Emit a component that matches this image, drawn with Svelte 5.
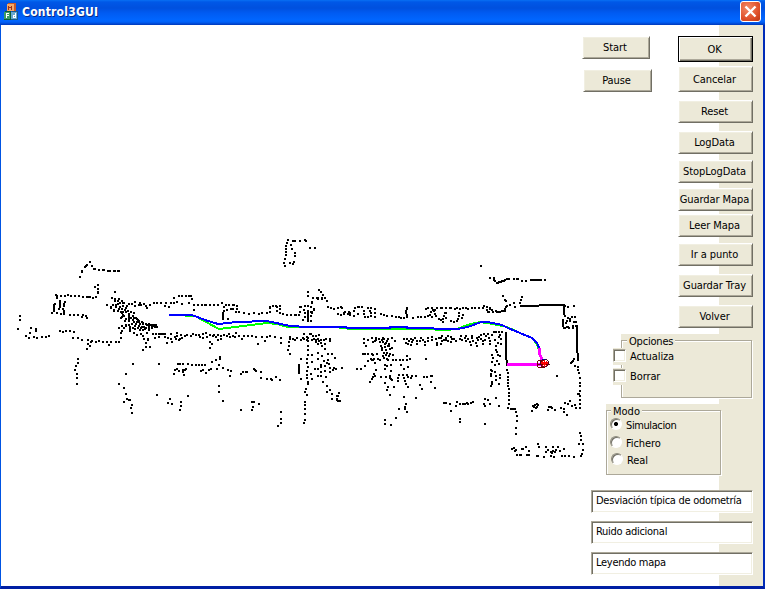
<script>
  const commands = ['OK', 'Cancelar', 'Reset', 'LogData', 'StopLogData', 'Guardar Mapa', 'Leer Mapa', 'Ir a punto', 'Guardar Tray', 'Volver'];
  const modes = ['Simulacion', 'Fichero', 'Real'];
  const messages = ['Desviación típica de odometría', 'Ruido adicional', 'Leyendo mapa'];
  let mode = $state('Simulacion');

  // Laser scan sectors: origin in pixels, readings in thirds of a pixel.
  const scans = [
    { x: 0, y: 225, data: `270,111 261,120 258,123 255,126 246,138 246,141 240,156 276,123 282,132 285,132 297,135 309,135 312,135 324,138 327,138 330,138 342,138 345,138 354,138 357,138
      294,180 285,186 294,192 294,201 294,204 168,210 171,213 171,216 171,219 183,213 195,213 204,210 213,213 225,213 237,213 249,216 261,216 264,216 270,216 279,219 288,216
      165,237 162,240 162,246 162,252 162,258 156,264 180,228 180,234 180,240 180,246 177,252 171,264 195,231 192,237 192,243 189,252 192,258 192,264 192,267 183,267
      210,270 222,270 234,270 246,276 249,270 258,273 261,279 60,273 60,285 54,312 93,309 108,312 108,318 90,324 78,333 87,339 102,336 111,339 126,336 138,336 147,333
      180,318 189,321 198,318 210,318 222,321 219,339 234,339 246,345 264,345 264,357 273,351 276,348 288,351 297,348 309,351 321,351 333,351 327,360 348,351 357,351 363,339 270,363 261,372
      234,402 234,414 228,423 225,435 231,447 231,459 231,477 357,477 372,489 378,507 381,522 387,525 390,525 372,531 396,540 393,549 396,564 378,447 399,417 477,417 471,510
      345,201 336,219 345,222 345,228 357,222 354,228 366,228 360,234 369,234 372,234 321,240 333,246 333,249 339,240 348,240 348,246 354,237 342,255 342,258 357,252 354,258 360,246 369,243 366,252 381,243 378,249 375,255 387,237 396,237 405,231 405,243 417,240 420,234 423,240 432,237 438,243 441,249 450,240 462,234 471,234 363,261 369,261 366,264 378,261 369,270 366,276 363,279 372,273 384,258 393,261 402,264 387,267 399,273 402,279 387,270 387,276 387,282 387,288 375,288 378,282 393,279 399,285 402,291 408,279 411,282 414,285 417,288 417,291 411,291 426,291 429,294 429,297 420,297 438,297 441,300 447,297 447,303 453,300 456,303 459,300 462,303 465,300 468,300 471,306 456,309 465,306 447,309 438,309 432,306 426,306 423,309 417,303 408,297 396,297 378,300 387,300 390,306 390,312 390,318 366,303 372,309 378,303 357,309 366,318 363,324 399,309 405,303 405,312 414,309 420,315 429,315 435,312 447,315 402,324 411,330 423,327 429,333 441,324 432,342 444,342 444,345 459,327 468,327 477,327 465,339 477,336 438,354 438,366 450,366 429,375` },
    { x: 160, y: 225, data: `384,45 381,54 378,63 378,72 378,81 378,90 375,102 372,114 375,123 393,60 396,72 405,84 405,93 402,111 399,117 390,114 399,48 405,48 420,48 435,45 438,48 450,69 465,69
      3,234 18,234 15,243 27,246 33,234 42,234 42,219 51,231 57,213 66,213 78,213 87,213 93,213 96,222 66,237 87,234 102,240 102,255 114,240 126,240 135,240 138,240 150,240 162,240 174,240 186,234 198,240 207,240 219,240 222,240 231,243 231,252 213,252 219,252 192,246 201,255 192,258 189,264 189,267 189,270 189,276 189,282 204,282 228,261 237,261 252,264 267,267 282,264 297,267 306,264 321,264 330,261 330,249 330,246 339,243 348,243 351,246 360,243 360,252 351,258 360,264 369,267 381,270 393,270 405,270 408,270 417,270 420,261 420,246 423,246 432,255 435,243 444,243 453,246 462,252 435,264 444,258 444,264 444,270 444,276 444,282 444,288 453,288 453,261 456,261 429,285 435,276 444,213 444,201 477,195 483,201 489,210 495,219 474,219 486,222 471,219 459,219 501,228 456,234 504,246
      3,327 9,327 15,327 15,336 24,339 21,354 33,327 33,342 36,351 45,336 51,324 51,333 48,342 57,345 63,330 60,342 66,339 75,333 81,330 93,333 99,327 108,330 117,330 120,336 129,339 129,327 138,324 141,336 150,330 150,351 156,357 150,369 159,333 162,330 168,336 174,330 174,345 183,342 183,333 192,330 201,333 210,336 207,327 219,333 225,336 228,324 237,333 246,342 252,333 264,333 276,333 288,336 294,357 306,336 315,348 321,336 330,333 345,336 363,339 363,354 390,336 390,342 387,351 387,363 384,375 390,387 399,342 405,345 411,339 423,345 429,339 432,327 432,342 441,336 441,345 450,327
      54,417 60,417 69,417 84,417 96,420 108,420 117,420 126,420 135,420 51,432 45,435 42,447 57,438 69,435 75,435 78,432 69,441 72,450 123,438 129,435 138,444 147,435 153,432 156,411 168,405 180,396 180,402 177,420 171,432 189,429 204,435 213,438 210,453 249,441 243,447 258,441 261,441 282,432 285,435 288,438 303,441 303,459 321,462 333,462 336,465 348,456 360,465 177,483 177,501 189,528 84,513 30,522 24,534 36,537 63,531 63,543 60,555 243,555 276,531 282,531 279,546 276,555 297,537 363,561 363,582 363,594 354,603 423,402 417,420 417,426 417,432 417,438 417,444 423,462 444,339 444,348 444,363 444,375 444,390 441,402 441,414 444,426 441,438 441,450 441,459 444,471 444,477 438,492 435,501 441,510 435,531 435,540 435,552 435,567 435,585 432,594` },
    { x: 310, y: 280, data: `27,30 33,36 39,45 36,54 21,54 24,57 9,54 45,54 51,63 6,66 6,69 54,81 12,87 12,90 3,81 6,99 3,108 3,123 63,84 72,87 84,84 93,81 96,84 84,102 93,105 102,99 105,96 102,102 117,96 120,99 120,105 114,102 132,93 135,84 144,81 147,81 156,81 132,108 144,102 162,93 162,102 165,111 174,111 180,93 183,99 183,108 174,84 195,87 195,99 195,111 183,84 213,102 222,105 231,108 246,108 258,111 267,111 273,114 282,114 291,84 291,87 288,93 288,99 291,105 291,111 309,114 324,111 333,111 345,111 354,108 366,111 348,87 354,84 366,84 369,90 375,90 372,93 363,96 360,105 375,102 381,84 387,117 378,108
      3,162 9,168 18,168 27,165 6,180 12,177 18,180 24,177 18,186 27,183 33,180 24,192 33,189 36,198 42,180 48,177 45,192 60,177 60,183 45,207 24,219 36,228 24,237 6,225 6,246 54,222 66,222 75,234 33,255 42,243 54,240 51,249 57,252 15,267 24,267 33,261 45,258 33,276 45,273 60,276 69,270 72,264 60,264 78,267 96,264 3,282 6,297 24,288 33,288 48,291 39,306 51,318 60,330 51,336 66,342 66,357 87,339 84,348 81,348 81,357 81,360 84,363 90,363
      162,177 162,189 168,198 174,180 186,174 189,186 198,174 198,180 195,183 207,177 210,186 216,180 219,174 222,177 219,186 231,183 234,177 246,174 255,183 225,192 228,189 237,192 213,198 216,204 225,201 234,198 240,207 246,204 216,210 228,210 237,198 222,219 231,219 240,222 249,225 159,222 165,222 174,222 186,222 189,225 201,222 192,237 189,240 183,237 186,240 174,243 204,237 210,240 222,234 231,237 237,228 228,225 219,228 234,240 249,240 258,240 270,240 279,240 291,240 300,237 291,228 348,237 273,255 294,261 282,267 195,249 165,258 153,267 141,267 198,270 225,255 231,258 243,255 225,267 243,273 192,282 189,291 186,297 180,306 195,288 213,291 228,291 240,288 240,294 243,297 246,300 264,294 267,285 264,303 279,285 282,294 291,285 285,303 294,291 303,294 306,288 318,288 288,312 294,321 330,315 336,327 342,291 351,291 363,288 366,288 363,306 375,324 225,309 234,321 252,321 231,330 240,345 282,351 318,354 288,372 285,381 285,387 267,387 291,396 258,414 225,420 225,432 243,435
      282,177 291,177 288,189 294,192 297,183 303,177 303,195 306,186 309,180 315,174 321,183 321,192 333,174 330,183 339,180 345,186 354,183 345,195 354,174 366,180 366,171 378,177 381,189 381,195 387,174` },
    { x: 440, y: 250, data: `123,48 150,84 162,84 162,90 165,93 171,99 174,99 177,96 183,96 186,93 192,93 195,90 201,87 204,87 207,87 222,87 231,87 234,87 246,93 258,93 273,90 279,90 285,90 291,90 297,90 303,90 315,90 189,138 195,150 198,153 246,141 243,150 240,159 222,159 210,165 225,171 201,168 198,171 195,177 195,183 186,183 192,183 180,186 177,186 171,186 168,183 156,180 159,186 144,186 147,186 141,180 150,177 150,174 141,171 132,168 129,174 117,174 105,174 96,174 84,177 78,174 69,174 60,177 51,174 45,177 33,174 30,174 18,174 6,174 3,174 15,189 18,189 12,198 18,204 9,207 3,210 9,216 33,213 42,216 51,213 54,207 57,198 66,204 69,195 57,189
      375,168 384,171 402,168 372,174 372,180 372,186 372,192 375,198 384,204 396,201 405,201 390,207 390,213 402,216 408,216 381,213 378,219 369,210 369,216 369,222 369,228 372,234 375,234 381,231 384,231 387,234 399,228 399,234 408,228
      3,264 6,258 6,273 3,282 12,270 18,264 18,270 24,258 24,273 33,261 36,267 33,276 42,267 48,273 60,267 63,258 66,270 75,264 78,258 78,273 84,267 90,276 93,285 96,258 96,264 99,273 111,264 114,270 108,279 111,288 117,261 123,255 123,267 129,273 129,282 132,252 138,258 135,270 144,252 147,264 150,273 150,282 156,255 162,246 168,246 177,246 186,246 180,255 177,261 183,267 165,270 174,279 183,282 168,288 168,300 171,306 174,315 156,315 159,324 156,336 171,333 177,342 180,318 165,345 153,360 156,363 153,372 153,378 165,366 168,378 180,375 180,384 168,390 177,402 156,396 156,402 153,408
      201,345 201,360 204,369 204,381 204,390 204,399 204,408 207,417 207,429 207,438 207,450 207,462 204,474 213,477 219,477 225,477 228,486 231,498 231,513 228,534 228,552 276,483 279,468 282,471 285,465 291,462 294,465 288,474 291,471 324,480 327,471 333,471 336,474 345,480 363,474 372,477 375,459 384,462 390,453 396,468 405,465 408,474 372,486 381,495 420,474 420,462 420,450 420,438 417,432 414,432 420,423 420,408 420,399 420,384 417,369 414,360 414,351 405,348 402,327 399,333 396,336 393,339 351,378
      12,459 18,459 30,462 48,468 51,456 60,462 69,462 75,462 81,459 84,462 93,459 99,456 33,483 60,507 60,516 135,522 135,447 135,468 132,462 144,450 150,462 168,444 177,468
      420,549 423,558 423,570 417,582 429,582 429,600 426,612 423,618 402,621 387,618 375,618 366,618 342,621 333,618 312,621 294,618 291,618 267,615 261,615 243,615 240,615 231,615 225,603 228,600 222,594 216,597 246,597 249,597 258,591 267,603 294,582 297,591 318,591 324,600 318,606 333,606 336,609 339,603 345,606 348,600 339,591 354,591 360,603 372,597` }
  ];
  const pixels = scans.flatMap(({ x, y, data }) => data.trim().split(/\s+/).map(pair => {
    const [dx, dy] = pair.split(',').map(Number);
    return `M${x + Math.round(dx / 3) - 1} ${y + Math.round(dy / 3) - 1}h2v2h-2z`;
  })).join('');
</script>

<main class="window">
  <header>
    <svg class="logo" width="16" height="18" viewBox="0 0 16 18" shape-rendering="crispEdges">
      <path fill="#c85a28" d="M4 1l1-1h7l1 1v6l-1 1H4z" /><path fill="#f3a868" d="M4 1h7v7H4z" />
      <path fill="#a03018" d="M5 3h1v4H5zm3 0h1v4H8zM6 4h2v1H6z" />
      <path fill="#0d5c38" d="M1 9l1-1h6v9H1z" /><path fill="#3d9c66" d="M1 9h6v7H1z" />
      <path fill="#fff" d="M3 10h3v1H4v1h2v1H4v2H3z" />
      <path fill="#1c5888" d="M8 9l1-1h5l1 1v7l-1 1H8z" /><path fill="#68a8d0" d="M8 9h6v7H8z" />
      <path fill="#fff" d="M12 10h1v5h-3v-3h2zm-1 3v1h1v-1z" />
    </svg>
    <h1>Control3GUI</h1>
    <button class="close" aria-label="Cerrar"><svg width="19" height="19" viewBox="0 0 19 19"><path d="M4.5 4.5l10 10M14.5 4.5l-10 10" stroke="#fff" stroke-width="2.4" /></svg></button>
  </header>
  <div class="body">
    <div class="controls">
      <div class="transport"><button>Start</button><button>Pause</button></div>
      <div class="commands">
        {#each commands as label}<button>{label}</button>{/each}
      </div>
      <fieldset class="options">
        <span class="title">Opciones</span>
        <label><input type="checkbox" />Actualiza</label>
        <label><input type="checkbox" />Borrar</label>
      </fieldset>
      <fieldset class="modes">
        <span class="title">Modo</span>
        {#each modes as item}
          <label><input type="radio" name="mode" value={item} bind:group={mode} />{item}</label>
        {/each}
      </fieldset>
      <div class="messages">
        {#each messages as message}<div class="field">{message}</div>{/each}
      </div>
    </div>
  </div>
  <svg class="map" width="765" height="589" viewBox="0 0 765 589" shape-rendering="crispEdges" fill="none">
    <path d={pixels} fill="#000" />
    <g stroke="#000" stroke-width="2"><path d="M520 306H536L542 305H564V315M506 332V355L507 364M577 325V344L578 361" /></g>
    <g stroke-width="2">
      <path stroke="#0f0" d="M185 316H195L219 329L243 326L267 323L277 324L288 327H335L351 329H425L445 330L457 329L467 325L480 322L493 324L507 327L520 333L532 338L537 344L541 357" />
      <path stroke="#00f" d="M169 315H192L205 320L218 324L237 322L267 321L290 326L308 327H342L351 328H390V327H407V328H427L440 329L457 329L468 327L481 322H488L502 325L508 328L520 333L532 338L537 343L540 350" />
    </g>
    <path stroke="#f0f" stroke-width="3" d="M507 364.5H541M539.5 348V354L541 357V365" />
    <g stroke="#700000"><circle cx="541" cy="364" r="4" /><path d="M537 364H550M541 360V368" /></g>
    <circle cx="544.5" cy="363" r="4" stroke="#500020" /><path d="M541 363H548M544.5 359V367M542 361L547 366M547 361L542 366" stroke="#f00" stroke-width="1.3" />
    <path d="M542 359H546" stroke="#001078" />
  </svg>
</main>

<style>
  :global(body) { margin: 0; overflow: hidden; }
  * { box-sizing: border-box; }
  .window { position: relative; width: 765px; height: 589px; display: flex; flex-direction: column; background: #fff; font: 11px/13px "DejaVu Sans Condensed", "DejaVu Sans", sans-serif; font-stretch: condensed; color: #000; }
  header { height: 25px; flex: none; display: flex; align-items: flex-start; padding: 1px 4px 0 3px; background: linear-gradient(#0870f4 0, #0058e7 2px, #0050de 8px, #005bf2 13px, #06f 20px, #0061f8 22px, #0045d0 24px, #0038b8 25px); }
  .logo { margin-top: 2px; }
  h1 { margin: 4px 0 0 3px; font-size: 12px; line-height: 14px; letter-spacing: .22px; color: #fff; text-shadow: 1px 1px #082b86; }
  button { padding: 0; font: inherit; color: inherit; }
  .close { width: 21px; height: 21px; margin-left: auto; border: 1px solid #fff; border-radius: 3px; background: radial-gradient(circle at 35% 30%, #f28b67, #e0512b 60%, #bc3513); }
  .close svg { display: block; }
  .body { flex: 1; border: solid; border-width: 0 2px 3px 1px; border-color: #0034c2 #002bb8 #001fa4 #0059e8; border-left-color: #0054e3; background: linear-gradient(90deg, #fff 718px, #ece9d8 718px); }
  .controls { width: 171px; height: 561px; margin-left: 581px; display: grid; grid-template-columns: 96px 75px; grid-template-rows: 309px 64px 77px auto; }
  .transport, .commands { display: flex; flex-direction: column; padding-top: 11px; }
  .transport button, .commands button { width: 75px; height: 23px; flex: none; padding-right: 2px; border: 1px solid; border-color: #fff #716f64 #716f64 #fff; box-shadow: inset 1px 1px #f1efe2, inset -1px -1px #aca899; background: #ece9d8; line-height: 21px; white-space: nowrap; letter-spacing: -.08px; }
  .transport button:first-child { width: 68px; }
  .transport button:last-child { width: 69px; margin: 10px 0 0 1px; }
  .commands button:nth-child(1) { height: 26px; border: 1px solid #000; box-shadow: inset 1px 1px #fff, inset -1px -1px #716f64, inset -2px -2px #aca899; }
  .commands button:nth-child(2) { height: 26px; margin-top: 4px; }
  .commands button:nth-child(3), .commands button:nth-child(4), .commands button:nth-child(9), .commands button:nth-child(10) { margin-top: 8px; }
  .commands button:nth-child(5), .commands button:nth-child(8) { margin-top: 6px; }
  .commands button:nth-child(6) { margin-top: 5px; }
  .commands button:nth-child(7) { margin-top: 3px; }
  fieldset { grid-column: 1 / -1; min-width: 0; margin: 0; border: 0; padding: 1px 0 0; background: #ece9d8; display: flex; flex-direction: column; align-items: flex-start; position: relative; z-index: 0; }
  fieldset::before { content: ""; position: absolute; z-index: -1; inset: 6px 0 0; border: 1px solid #aca899; box-shadow: inset 1px 1px #fff, 1px 1px #fff; }
  .title { background: #ece9d8; padding: 0 2px; letter-spacing: -.2px; }
  .options { width: 131px; height: 64px; margin-left: 39px; }
  .options .title { margin-left: 6px; }
  .options label { margin-left: -8px; height: 17px; }
  .options label + label { margin-top: 3px; }
  .modes { width: 115px; height: 71px; margin: 6px 0 0 24px; }
  .modes .title { margin-left: 5px; letter-spacing: 0; }
  .modes label { margin-left: 4px; height: 14px; letter-spacing: -.4px; }
  .modes label + label { margin-top: 4px; letter-spacing: -.1px; }
  .modes label:last-child { margin: 3px 0 0 5px; }
  label { display: flex; align-items: center; background: #ece9d8; letter-spacing: -.1px; }
  input { appearance: none; width: 13px; height: 13px; margin: 0 4px 0 0; flex: none; background: #fff; }
  input[type='checkbox'] { position: relative; top: -1px; border: 1px solid; border-color: #aca899 #fff #fff #aca899; box-shadow: inset 1px 1px #716f64, inset -1px -1px #f1efe2; }
  input[type='radio'] { width: 12px; height: 12px; border: 1px solid; border-color: #8c897c #fff #fff #8c897c; border-radius: 50%; box-shadow: inset 1px 1px #716f64; position: relative; top: -1px; }
  input[type='radio']:checked { background: radial-gradient(circle at 5px 5px, #000 0 1.8px, #fff 2.3px); }
  .messages { grid-column: 1 / -1; display: flex; flex-direction: column; gap: 8px; margin: 15px 0 0 9px; }
  .field { width: 162px; height: 23px; padding: 3px 4px; border: 1px solid; border-color: #aca899 #fff #fff #aca899; box-shadow: inset 1px 1px #716f64, inset -1px -1px #f1efe2; background: #fff; white-space: nowrap; letter-spacing: -.28px; }
  .map { position: absolute; inset: 0; pointer-events: none; }
</style>
